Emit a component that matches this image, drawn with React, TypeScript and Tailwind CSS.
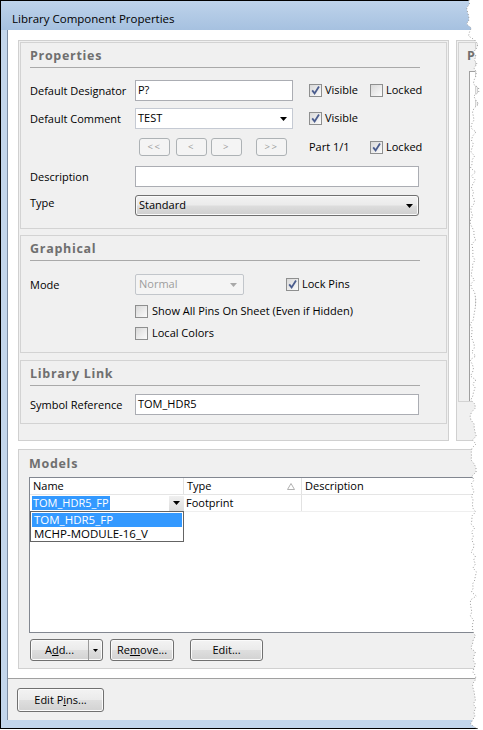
import React from "react";

function Check({ checked }: { checked?: boolean }) {
  return (
    <span className="relative flex h-[13px] w-[13px] shrink-0 items-center justify-center border border-[#8e8f8f] bg-[linear-gradient(135deg,#d9d9d9,#fbfbfb)]">
      {checked && (
        <svg width="11" height="11" viewBox="0 0 11 11" className="absolute left-0 top-0">
          <path d="M2.2 5.4 L4.6 8.4 L9 1.6" stroke="#4b5d8e" strokeWidth="1.8" fill="none" />
        </svg>
      )}
    </span>
  );
}

function Arrow({ color = "#000" }: { color?: string }) {
  return (
    <svg width="7" height="4" viewBox="0 0 7 4" className="shrink-0">
      <path d="M0 0H7L3.5 4Z" fill={color} />
    </svg>
  );
}

function Heading({ children }: { children: React.ReactNode }) {
  return (
    <div className="mt-[4px] h-[18px] text-[12.5px] font-bold leading-[18px] tracking-[0.7px] text-[#6f6f6f]">
      {children}
    </div>
  );
}

function Rule() {
  return <div className="mt-[2px] h-px w-[390px] bg-[#a9a9a9]" />;
}

function Btn({ children, w }: { children: React.ReactNode; w: string }) {
  return (
    <div
      className={`${w} flex h-full items-center justify-center rounded-[3px] border border-[#707070] bg-[linear-gradient(#f3f3f3,#ebebeb_48%,#dedede_52%,#d2d2d2)] text-[11px] text-black shadow-[inset_0_0_0_1px_#fbfbfb]`}
    >
      {children}
    </div>
  );
}

function NavBtn({ children, w }: { children: React.ReactNode; w: string }) {
  return (
    <div
      className={`${w} flex h-[18px] items-center justify-center rounded-[3px] border border-[#adb2b5] bg-[#f4f4f4] text-[9.5px] tracking-[1.5px] text-[#9a9a9a]`}
    >
      {children}
    </div>
  );
}

function Label({ children }: { children: React.ReactNode }) {
  return <div className="w-[105px] shrink-0 text-[11px] leading-[16px] text-black">{children}</div>;
}

function Torn() {
  const pts: [number, number][] = [];
  let seed = 7;
  const rnd = () => {
    seed = (seed * 9301 + 49297) % 233280;
    return seed / 233280;
  };
  for (let y = 0; y <= 730; y += 4) {
    let base = 15;
    if (y < 40) base = 14;
    else if (y < 110) base = 21;
    else if (y < 430) base = 18;
    else if (y < 600) base = 19;
    else base = 18;
    pts.push([base + (rnd() - 0.5) * 6, y]);
  }
  const line = pts.map((p) => `${p[0].toFixed(1)},${p[1]}`).join(" ");
  const poly = line + " 28,730 28,0";
  return (
    <svg className="absolute left-[455px] top-0" width="28" height="730" viewBox="0 0 28 730">
      <polygon points={poly} fill="#ffffff" />
      <polyline points={line} fill="none" stroke="#9c9c9c" strokeWidth="1" strokeDasharray="1 2" />
    </svg>
  );
}

export default function App() {
  return (
    <div className="relative h-[730px] w-[483px] overflow-hidden bg-white font-['Open_Sans','Noto_Sans',sans-serif] text-black">
      <div className="flex h-[729px] w-[478px] flex-col border-y border-l border-black">
        {/* title bar */}
        <div className="h-[29px] shrink-0 bg-[linear-gradient(#bed3eb,#a6c1e0)] pl-[11px] pt-[10px] text-[11.5px] leading-[16px]">
          Library Component Properties
        </div>
        <div className="flex min-h-0 flex-1">
          <div className="w-[7px] shrink-0 border-r border-[#7d8da3] bg-[#c3d6ec]" />
          {/* client */}
          <div className="flex min-w-0 flex-1 flex-col bg-white">
            <div className="flex pl-[10px] pt-[10px]">
              {/* Properties outer box */}
              <div className="flex h-[401px] w-[431px] shrink-0 flex-col gap-0 border border-[#d0d0d0] bg-[#f0f0f0] p-px">
                {/* Properties group */}
                <div className="flex h-[187px] shrink-0 flex-col border border-[#d3d3d3] pl-[9px]">
                  <Heading>Properties</Heading>
                  <Rule />
                  <div className="mt-[12px] flex h-[21px] items-center">
                    <Label>Default Designator</Label>
                    <div className="flex h-[21px] w-[158px] items-center border border-[#abadb3] bg-white pl-[2px] text-[11px]">
                      P?
                    </div>
                    <div className="ml-[16px] flex w-[61px] items-center gap-[3px] text-[11px]">
                      <Check checked />
                      <span>Visible</span>
                    </div>
                    <div className="flex items-center gap-[3px] text-[11px]">
                      <Check />
                      <span>Locked</span>
                    </div>
                  </div>
                  <div className="mt-[7px] flex h-[21px] items-center">
                    <Label>Default Comment</Label>
                    <div className="flex h-[21px] w-[158px] items-center justify-between border border-[#c5cad3] bg-white pl-[2px] pr-[5px] text-[11px]">
                      <span>TEST</span>
                      <Arrow />
                    </div>
                    <div className="ml-[16px] flex items-center gap-[3px] text-[11px]">
                      <Check checked />
                      <span>Visible</span>
                    </div>
                  </div>
                  <div className="mt-[9px] flex h-[18px] items-center">
                    <div className="w-[109px] shrink-0" />
                    <NavBtn w="w-[31px]">&lt;&lt;</NavBtn>
                    <div className="ml-[6px]">
                      <NavBtn w="w-[31px]">&lt;</NavBtn>
                    </div>
                    <div className="ml-[4px]">
                      <NavBtn w="w-[31px]">&gt;</NavBtn>
                    </div>
                    <div className="ml-[14px]">
                      <NavBtn w="w-[31px]">&gt;&gt;</NavBtn>
                    </div>
                    <div className="ml-[22px] w-[61px] text-[11px]">Part 1/1</div>
                    <div className="flex items-center gap-[3px] text-[11px]">
                      <Check checked />
                      <span>Locked</span>
                    </div>
                  </div>
                  <div className="mt-[10px] flex h-[21px] items-center">
                    <Label>Description</Label>
                    <div className="h-[21px] w-[284px] border border-[#abadb3] bg-white" />
                  </div>
                  <div className="mt-[8px] flex h-[21px] items-start">
                    <Label>Type</Label>
                    <div className="flex h-[21px] w-[284px] items-center justify-between rounded-[3px] border border-[#707070] bg-[linear-gradient(#f2f2f2,#ebebeb_48%,#dddddd_52%,#cfcfcf)] pl-[3px] pr-[5px] text-[11px] shadow-[inset_0_0_0_1px_#fafafa]">
                      <span>Standard</span>
                      <Arrow />
                    </div>
                  </div>
                </div>
                {/* Graphical */}
                <div className="mt-[6px] flex h-[118px] shrink-0 flex-col border border-[#d3d3d3] pl-[9px]">
                  <Heading>Graphical</Heading>
                  <Rule />
                  <div className="mt-[13px] flex h-[21px] items-center">
                    <Label>Mode</Label>
                    <div className="flex h-[21px] w-[109px] items-center justify-between rounded-[2px] border border-[#c2c6cb] bg-[#f4f4f4] pl-[3px] pr-[6px] text-[11px] text-[#9d9d9d]">
                      <span>Normal</span>
                      <Arrow color="#a8a8a8" />
                    </div>
                    <div className="ml-[42px] flex items-center gap-[3px] text-[11px]">
                      <Check checked />
                      <span>Lock Pins</span>
                    </div>
                  </div>
                  <div className="mt-[8px] flex h-[16px] items-center pl-[105px]">
                    <div className="flex items-center gap-[4px] text-[11px]">
                      <Check />
                      <span>Show All Pins On Sheet (Even if Hidden)</span>
                    </div>
                  </div>
                  <div className="mt-[6px] flex h-[16px] items-center pl-[105px]">
                    <div className="flex items-center gap-[4px] text-[11px]">
                      <Check />
                      <span>Local Colors</span>
                    </div>
                  </div>
                </div>
                {/* Library Link */}
                <div className="mt-[7px] flex h-[64px] shrink-0 flex-col border border-[#d3d3d3] pl-[9px]">
                  <Heading>Library Link</Heading>
                  <Rule />
                  <div className="mt-[8px] flex h-[21px] items-center">
                    <Label>Symbol Reference</Label>
                    <div className="flex h-[21px] w-[284px] items-center border border-[#abadb3] bg-white pl-[2px] text-[11px]">
                      TOM_HDR5
                    </div>
                  </div>
                </div>
              </div>
              {/* partial right box */}
              <div className="ml-[7px] flex h-[401px] min-w-0 flex-1 flex-col border border-[#d0d0d0] bg-[#f0f0f0] p-px">
                <div className="flex h-[360px] flex-col border border-[#d3d3d3] pl-[8px]">
                  <Heading>P</Heading>
                  <div className="ml-[2px] mt-[6px] h-[330px] border-l border-t border-[#a0a0a0] bg-white" />
                </div>
              </div>
            </div>
            {/* Models */}
            <div className="ml-[10px] mt-[8px] flex h-[220px] shrink-0 flex-col border border-[#d0d0d0] bg-[#f0f0f0]">
              <div className="ml-[10px] mt-[5px] h-[18px] text-[12.5px] font-bold leading-[18px] tracking-[0.7px] text-[#6f6f6f]">
                Models
              </div>
              <div className="relative ml-[10px] mt-[4px] flex h-[156px] flex-col border-y border-l border-[#828790] bg-white text-[11px]">
                <div className="flex h-[17px] shrink-0 items-center border-b border-[#e5e5e5]">
                  <div className="flex h-full w-[154px] items-center border-r border-[#e2e2e2] pl-[3px]">Name</div>
                  <div className="flex h-full w-[118px] items-center justify-between border-r border-[#e2e2e2] pl-[3px] pr-[6px]">
                    <span>Type</span>
                    <svg width="8" height="7" viewBox="0 0 8 7">
                      <path d="M4 0.5 L7.5 6.5 H0.5 Z" fill="none" stroke="#b0b0b0" strokeWidth="1" />
                    </svg>
                  </div>
                  <div className="flex h-full flex-1 items-center pl-[3px]">Description</div>
                </div>
                <div className="flex h-[17px] shrink-0 items-center border-b border-[#efefef]">
                  <div className="flex h-full w-[154px] items-center justify-between pl-[2px]">
                    <span className="bg-[#3399ff] px-px leading-[14px] text-white">TOM_HDR5_FP</span>
                    <div className="flex h-[15px] w-[15px] items-center justify-center bg-[linear-gradient(#f0f0f0,#dcdcdc)]">
                      <Arrow />
                    </div>
                  </div>
                  <div className="flex h-full w-[118px] items-center border-r border-[#e2e2e2] pl-[2px]">Footprint</div>
                  <div className="flex-1" />
                </div>
                {/* dropdown popup */}
                <div className="absolute left-0 top-[33px] flex h-[31px] w-[154px] flex-col border border-[#646464] bg-white p-px text-[11.5px]">
                  <div className="flex h-[14px] items-center bg-[#3399ff] pl-[2px] text-white">TOM_HDR5_FP</div>
                  <div className="flex h-[14px] items-center pl-[2px]">MCHP-MODULE-16_V</div>
                </div>
              </div>
              <div className="ml-[11px] mt-[6px] flex h-[22px]">
                <div className="flex h-full w-[73px] rounded-[3px] border border-[#707070] bg-[linear-gradient(#f3f3f3,#ebebeb_48%,#dedede_52%,#d2d2d2)] text-[11px] shadow-[inset_0_0_0_1px_#fbfbfb]">
                  <div className="flex flex-1 items-center justify-center border-r border-[#9a9a9a]">
                    <span>
                      A<u>d</u>d...
                    </span>
                  </div>
                  <div className="flex w-[13px] items-center justify-center">
                    <svg width="5" height="3" viewBox="0 0 5 3">
                      <path d="M0 0H5L2.5 3Z" fill="#000" />
                    </svg>
                  </div>
                </div>
                <div className="ml-[7px]">
                  <Btn w="w-[64px]">
                    <span>
                      Re<u>m</u>ove...
                    </span>
                  </Btn>
                </div>
                <div className="ml-[16px]">
                  <Btn w="w-[73px]">Edit...</Btn>
                </div>
              </div>
            </div>
            {/* bottom strip */}
            <div className="mt-[9px] flex flex-1 flex-col border-t border-[#a0a0a0] bg-[#f0f0f0] pl-[9px] pt-[9px]">
              <div className="h-[24px]">
                <Btn w="w-[87px]">
                  <span>
                    Edit P<u>i</u>ns...
                  </span>
                </Btn>
              </div>
            </div>
          </div>
        </div>
        <div className="h-[8px] shrink-0 bg-[#c3d6ec]" />
      </div>
      <Torn />
    </div>
  );
}
